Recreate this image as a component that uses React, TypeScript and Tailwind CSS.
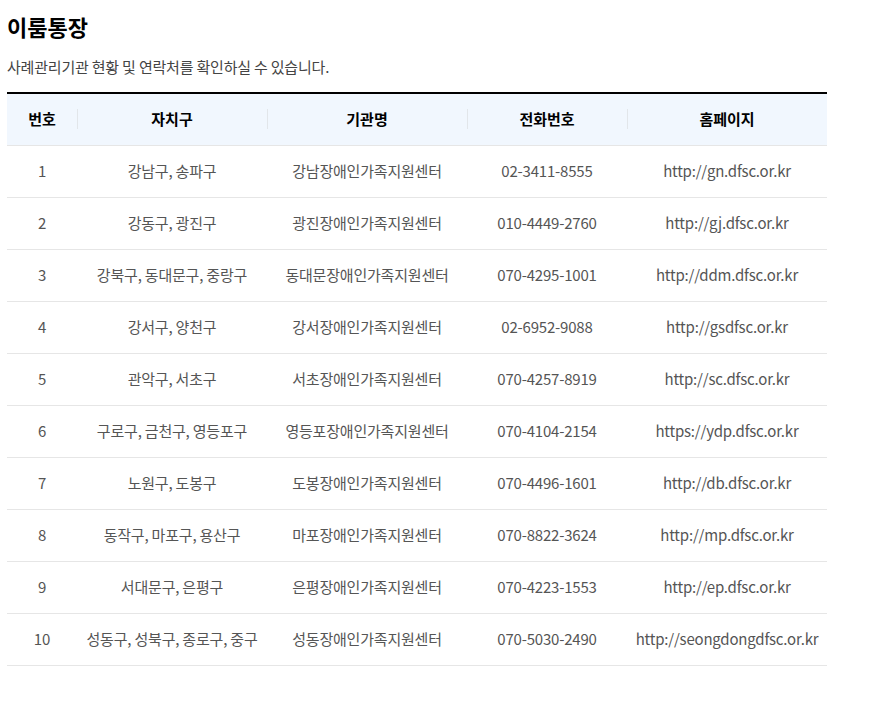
import React from 'react'

const rows = [
  { no: 1, gu: '강남구, 송파구', name: '강남장애인가족지원센터', tel: '02-3411-8555', url: 'http://gn.dfsc.or.kr' },
  { no: 2, gu: '강동구, 광진구', name: '광진장애인가족지원센터', tel: '010-4449-2760', url: 'http://gj.dfsc.or.kr' },
  { no: 3, gu: '강북구, 동대문구, 중랑구', name: '동대문장애인가족지원센터', tel: '070-4295-1001', url: 'http://ddm.dfsc.or.kr' },
  { no: 4, gu: '강서구, 양천구', name: '강서장애인가족지원센터', tel: '02-6952-9088', url: 'http://gsdfsc.or.kr' },
  { no: 5, gu: '관악구, 서초구', name: '서초장애인가족지원센터', tel: '070-4257-8919', url: 'http://sc.dfsc.or.kr' },
  { no: 6, gu: '구로구, 금천구, 영등포구', name: '영등포장애인가족지원센터', tel: '070-4104-2154', url: 'https://ydp.dfsc.or.kr' },
  { no: 7, gu: '노원구, 도봉구', name: '도봉장애인가족지원센터', tel: '070-4496-1601', url: 'http://db.dfsc.or.kr' },
  { no: 8, gu: '동작구, 마포구, 용산구', name: '마포장애인가족지원센터', tel: '070-8822-3624', url: 'http://mp.dfsc.or.kr' },
  { no: 9, gu: '서대문구, 은평구', name: '은평장애인가족지원센터', tel: '070-4223-1553', url: 'http://ep.dfsc.or.kr' },
  { no: 10, gu: '성동구, 성북구, 종로구, 중구', name: '성동장애인가족지원센터', tel: '070-5030-2490', url: 'http://seongdongdfsc.or.kr' },
]

const headers = ['번호', '자치구', '기관명', '전화번호', '홈페이지']
const widths = ['w-[70px]', 'w-[190px]', 'w-[200px]', 'w-[160px]', 'w-[200px]']

export default function App() {
  return (
    <div className="min-h-screen bg-white px-[7px] pt-[11px] font-['Noto_Sans_CJK_KR','Noto_Sans',sans-serif]">
      <h1 className="text-[22px] font-bold leading-[30px] text-black">이룸통장</h1>
      <p className="mt-[15px] text-[15px] leading-[22px] tracking-[-0.2px] text-[#444]">
        사례관리기관 현황 및 연락처를 확인하실 수 있습니다.
      </p>
      <table className="mt-[14px] w-[820px] table-fixed border-t-2 border-black border-collapse">
        <thead>
          <tr className="h-[52px] bg-[#f1f7fe] border-b border-[#e6e6e6]">
            {headers.map((h, i) => (
              <th key={h} className={`${widths[i]} relative p-0 text-center text-[15px] font-bold text-black`}>
                {i > 0 && (
                  <span className="absolute left-0 top-[15px] h-[20px] w-px bg-[#e2e6ea]" />
                )}
                {h}
              </th>
            ))}
          </tr>
        </thead>
        <tbody>
          {rows.map((r) => (
            <tr key={r.no} className="h-[52px] border-b border-[#e6e6e6] text-[15px] tracking-[-0.2px] text-[#555]">
              <td className="p-0 text-center">{r.no}</td>
              <td className="p-0 text-center">{r.gu}</td>
              <td className="p-0 text-center">{r.name}</td>
              <td className="p-0 text-center">{r.tel}</td>
              <td className="p-0 text-center whitespace-nowrap">{r.url}</td>
            </tr>
          ))}
        </tbody>
      </table>
    </div>
  )
}
